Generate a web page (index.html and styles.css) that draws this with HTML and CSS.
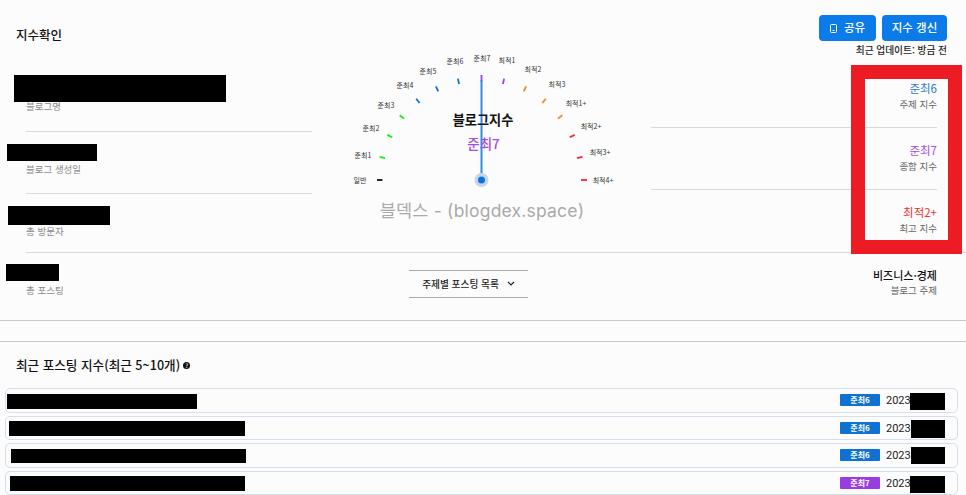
FILE: index.html
```html
<!DOCTYPE html>
<html lang="ko">
<head>
<meta charset="utf-8">
<title>지수확인</title>
<link rel="stylesheet" href="styles.css">
</head>
<body>
<main class="page">
  <section class="top">
    <h1 class="title">지수확인</h1>
    <svg class="gauge" viewBox="0 0 339 252" width="339" height="252" aria-label="블로그지수 게이지">
      <g class="ticks">
        <line class="k" x1="70.5" y1="180" x2="65" y2="180"/>
        <line class="g" x1="73" y1="158.1" x2="67.6" y2="156.9"/>
        <line class="g" x1="80.3" y1="137.3" x2="75.3" y2="134.9"/>
        <line class="g" x1="92" y1="118.6" x2="87.7" y2="115.2"/>
        <line class="b" x1="107.6" y1="103" x2="104.2" y2="98.7"/>
        <line class="b" x1="126.3" y1="91.3" x2="123.9" y2="86.3"/>
        <line class="b" x1="147.1" y1="84" x2="145.9" y2="78.6"/>
        <line class="p" x1="169.5" y1="81.5" x2="169.5" y2="75"/>
        <line class="p" x1="190.9" y1="84" x2="192.1" y2="78.6"/>
        <line class="o" x1="211.7" y1="91.3" x2="214.1" y2="86.3"/>
        <line class="o" x1="230.4" y1="103" x2="233.8" y2="98.7"/>
        <line class="o" x1="246" y1="118.6" x2="250.3" y2="115.2"/>
        <line class="r" x1="257.7" y1="137.3" x2="262.7" y2="134.9"/>
        <line class="r" x1="265" y1="158.1" x2="270.4" y2="156.9"/>
        <line class="r" x1="269" y1="180" x2="275" y2="180"/>
      </g>
      <g class="labels">
        <text x="48" y="180">일반</text>
        <text x="51" y="155">준최1</text>
        <text x="59" y="128">준최2</text>
        <text x="74" y="105">준최3</text>
        <text x="93" y="85">준최4</text>
        <text x="116" y="71">준최5</text>
        <text x="143" y="61">준최6</text>
        <text x="170" y="58">준최7</text>
        <text x="195" y="60">최적1</text>
        <text x="221" y="69">최적2</text>
        <text x="245" y="84">최적3</text>
        <text x="264" y="103">최적1+</text>
        <text x="279" y="126">최적2+</text>
        <text x="288" y="152">최적3+</text>
        <text x="291" y="180">최적4+</text>
      </g>
      <line class="needle" x1="169.5" y1="80" x2="169.5" y2="180"/>
      <circle class="halo" cx="169.5" cy="180" r="7"/>
      <circle class="hub" cx="169.5" cy="180" r="3.5"/>
      <text class="gauge-name" x="171" y="119.5">블로그지수</text>
      <text class="gauge-value" x="171.5" y="142.5">준최7</text>
      <text class="watermark" x="170" y="210">블덱스 - (blogdex.space)</text>
    </svg>
    <div class="actions">
      <div class="buttons">
        <button class="btn btn-share" type="button">
          <svg class="phone" viewBox="0 0 7 9" width="7" height="9"><rect x="0.5" y="0.5" width="6" height="8" rx="1"/><line x1="2.5" y1="6.5" x2="4.5" y2="6.5"/></svg>
          공유
        </button>
        <button class="btn" type="button">지수 갱신</button>
      </div>
      <p class="updated">최근 업데이트: 방금 전</p>
    </div>
    <ul class="facts">
      <li class="fact fact-a"><span class="cap">블로그명</span></li>
      <li class="fact fact-b"><span class="cap">블로그 생성일</span></li>
      <li class="fact fact-c"><span class="cap">총 방문자</span></li>
    </ul>
    <ul class="scores">
      <li class="score"><strong class="val blue">준최6</strong><span class="cap dark">주제 지수</span></li>
      <li class="score"><strong class="val purple">준최7</strong><span class="cap dark">종합 지수</span></li>
      <li class="score"><strong class="val red">최적2+</strong><span class="cap dark">최고 지수</span></li>
    </ul>
  </section>
  <div class="rule"></div>
  <section class="bottom">
    <div class="posts"><span class="cap">총 포스팅</span></div>
    <div class="drop-cell">
      <div class="drop">주제별 포스팅 목록
        <svg class="chev" viewBox="0 0 8 5" width="8" height="5"><path d="M1 1l3 3 3-3"/></svg>
      </div>
    </div>
    <div class="topic"><strong>비즈니스·경제</strong><span class="cap dark">블로그 주제</span></div>
  </section>
  <div class="gap-band"></div>
  <section class="recent">
    <h2 class="recent-title">최근 포스팅 지수(최근 5~10개) <span class="help">?</span></h2>
    <ul class="rows">
      <li class="row"><span class="badge bg-blue">준최6</span><span class="date">2023</span></li>
      <li class="row"><span class="badge bg-blue">준최6</span><span class="date">2023</span></li>
      <li class="row"><span class="badge bg-blue">준최6</span><span class="date">2023</span></li>
      <li class="row"><span class="badge bg-purple">준최7</span><span class="date">2023</span></li>
    </ul>
  </section>
</main>
<div class="redact r1"></div>
<div class="redact r2"></div>
<div class="redact r3"></div>
<div class="redact r4"></div>
<div class="redact r5"></div>
<div class="redact r6"></div>
<div class="redact r7"></div>
<div class="redact r8"></div>
<div class="redact d1"></div>
<div class="redact d2"></div>
<div class="redact d3"></div>
<div class="redact d4"></div>
<div class="redbox"></div>
</body>
</html>
```
FILE: styles.css
```css
* { box-sizing: border-box; }
html, body { margin: 0; padding: 0; height: 495px; overflow: hidden; background: #fcfcfc; }
body { position: relative; font-family: "Noto Sans CJK KR", "Noto Sans", sans-serif; color: #111; }
ul { list-style: none; margin: 0; padding: 0; }
h1, h2, p { margin: 0; }

.top { display: grid; grid-template-columns: 312px 339px 315px; grid-template-rows: 65px 187px; height: 252px; }
.title { grid-column: 1; grid-row: 1; font-size: 12.5px; font-weight: 500; line-height: 18px; padding: 26px 0 0 16px; }
.gauge { grid-column: 2; grid-row: 1 / 3; display: block; }
.actions { grid-column: 3; grid-row: 1; display: flex; flex-direction: column; align-items: flex-end; padding: 15px 19px 0 0; }
.buttons { display: flex; gap: 6px; }
.btn { display: flex; align-items: center; justify-content: center; gap: 7px; height: 26px; width: 65px; border: 0; border-radius: 4px; background: #0a7be8; color: #fff; font: 500 11.5px/1 "Noto Sans CJK KR", sans-serif; padding: 0; }
.btn-share { width: 57px; }
.phone { fill: none; stroke: #fff; stroke-width: 1; }
.updated { font-size: 9.7px; font-weight: 500; line-height: 14px; margin-top: 2px; color: #222; }

.facts { grid-column: 1; grid-row: 2; padding-left: 26px; display: flex; flex-direction: column; }
.fact { display: flex; align-items: flex-end; border-bottom: 1px solid #d9d9d9; }
.fact-a { height: 67px; padding-bottom: 18px; }
.fact-b { height: 62px; padding-bottom: 17px; }
.fact-c { height: 58px; padding-bottom: 14px; border-bottom: 0; }
.cap { font-size: 9.5px; line-height: 14px; color: #8a8a8a; }
.cap.dark { color: #666; }

.scores { grid-column: 3; grid-row: 2; padding-right: 29px; display: flex; flex-direction: column; }
.score { height: 62px; display: flex; flex-direction: column; align-items: flex-end; padding-top: 14px; gap: 1px; border-bottom: 1px solid #d9d9d9; }
.score:first-child { height: 63px; padding-top: 15px; }
.score:last-child { border-bottom: 0; }
.val { font-size: 11.5px; font-weight: 400; line-height: 16px; }
.blue { color: #2a7bd0; }
.purple { color: #a24ee0; }
.red { color: #f03030; }

.ticks line { stroke-width: 1.8; }
.k { stroke: #111; }
.g { stroke: #10f010; }
.b { stroke: #0f72d2; }
.p { stroke: #a040e0; }
.o { stroke: #f08a1e; }
.r { stroke: #f52828; }
.labels text { font-size: 7px; fill: #333; text-anchor: middle; dominant-baseline: central; }
.needle { stroke: #2a8ee6; stroke-width: 2; }
.halo { fill: #c9d6e6; }
.hub { fill: #0a74da; }
.gauge-name { font-size: 13.2px; font-weight: 700; fill: #111; text-anchor: middle; dominant-baseline: central; }
.gauge-value { font-size: 13.5px; font-weight: 500; fill: #a24ee0; text-anchor: middle; dominant-baseline: central; }
.watermark { font-family: "Inter", "Noto Sans CJK KR", sans-serif; font-size: 17.5px; letter-spacing: 0.2px; fill: #aaa; text-anchor: middle; dominant-baseline: central; }

.rule { height: 1px; margin-left: 26px; background: #d9d9d9; }

.bottom { display: grid; grid-template-columns: 312px 339px 1fr; height: 68px; border-bottom: 1px solid #c8c8c8; }
.posts { padding: 22px 0 0 26px; }
.drop-cell { display: flex; padding: 17px 0 0 97px; }
.drop { width: 119px; height: 28px; border-top: 1.5px solid #aaa; border-bottom: 1.5px solid #aaa; display: flex; align-items: center; justify-content: center; gap: 8px; padding-bottom: 1px; font-size: 9.7px; font-weight: 500; color: #222; }
.chev { fill: none; stroke: #222; stroke-width: 1.2; }
.topic { display: flex; flex-direction: column; align-items: flex-end; padding: 15px 29px 0 0; font-size: 11px; line-height: 15px; }
.topic strong { font-weight: 500; }

.gap-band { height: 21px; border-bottom: 1px solid #c8c8c8; }

.recent-title { font-size: 12.6px; font-weight: 500; line-height: 18px; padding: 14px 0 0 16px; display: flex; align-items: center; gap: 3px; }
.help { width: 7px; height: 7px; border-radius: 50%; background: #111; color: #fff; font-size: 6px; line-height: 7px; text-align: center; }
.rows { margin: 14px 8px 0 5px; display: flex; flex-direction: column; gap: 3px; }
.row { height: 24.5px; border: 1.5px solid #d5deeb; border-radius: 5px; display: flex; align-items: center; justify-content: flex-end; padding-right: 48px; gap: 6px; }
.badge { width: 40px; height: 12px; border-radius: 1px; color: #fff; font-size: 8px; font-weight: 700; line-height: 12px; text-align: center; }
.bg-blue { background: #0f72d2; }
.bg-purple { background: #9a3de0; }
.date { font-family: "Roboto", sans-serif; font-size: 11px; line-height: 14px; padding-top: 2px; width: 23px; color: #222; }

.redact { position: absolute; background: #000; }
.r1 { left: 14px; top: 75px; width: 212px; height: 27px; }
.r2 { left: 7px; top: 144px; width: 90px; height: 17px; }
.r3 { left: 8px; top: 206px; width: 102px; height: 19px; }
.r4 { left: 6px; top: 264px; width: 53px; height: 17px; }
.r5 { left: 7px; top: 394px; width: 190px; height: 14.5px; }
.r6 { left: 9px; top: 421px; width: 236px; height: 15px; }
.r7 { left: 11px; top: 449px; width: 235px; height: 14px; }
.r8 { left: 10px; top: 476px; width: 235px; height: 15px; }
.d1 { left: 910px; top: 393px; width: 35px; height: 17px; }
.d2 { left: 911px; top: 420px; width: 34px; height: 17.5px; }
.d3 { left: 911px; top: 447px; width: 34px; height: 17px; }
.d4 { left: 910px; top: 476px; width: 35px; height: 17px; }
.redbox { position: absolute; left: 851px; top: 65px; width: 111px; height: 189px; border: 14px solid #ed1c24; }
```
